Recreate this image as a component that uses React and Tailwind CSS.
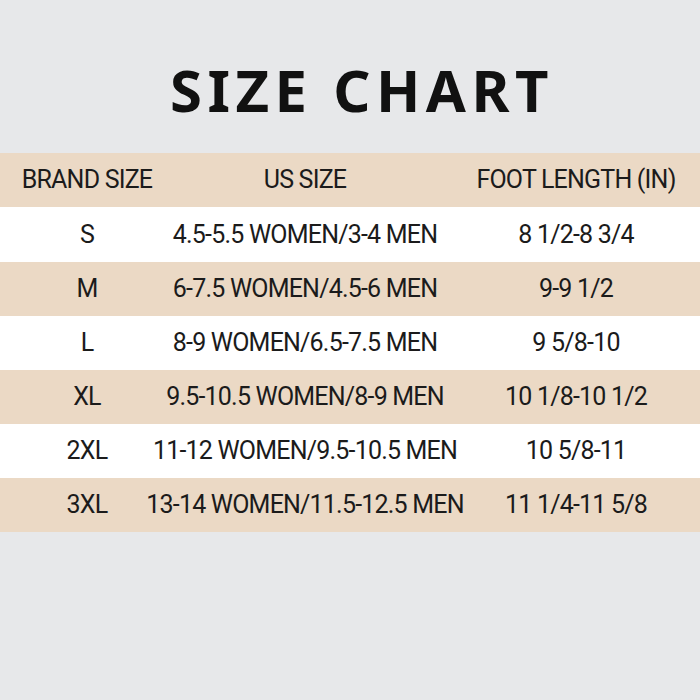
import React from 'react';

const rows = [
  { brand: 'S', us: '4.5-5.5 WOMEN/3-4 MEN', foot: '8 1/2-8 3/4' },
  { brand: 'M', us: '6-7.5 WOMEN/4.5-6 MEN', foot: '9-9 1/2' },
  { brand: 'L', us: '8-9 WOMEN/6.5-7.5 MEN', foot: '9 5/8-10' },
  { brand: 'XL', us: '9.5-10.5 WOMEN/8-9 MEN', foot: '10 1/8-10 1/2' },
  { brand: '2XL', us: '11-12 WOMEN/9.5-10.5 MEN', foot: '10 5/8-11' },
  { brand: '3XL', us: '13-14 WOMEN/11.5-12.5 MEN', foot: '11 1/4-11 5/8' },
];

const Row = ({ cells, beige, height }) => (
  <div className={`flex items-center whitespace-nowrap ${height} ${beige ? 'bg-[#ebd9c5]' : 'bg-white'}`}>
    <div className="w-[174px] flex justify-center">{cells[0]}</div>
    <div className="w-[262px] flex justify-center">{cells[1]}</div>
    <div className="w-[264px] flex justify-center pl-[16px]">{cells[2]}</div>
  </div>
);

export default function App() {
  return (
    <div
      className="w-[700px] h-[700px] bg-[#e7e8ea] text-[#1b1b1b] overflow-hidden"
      style={{ fontFamily: 'Roboto, "Noto Sans", sans-serif' }}
    >
      <div className="h-[153px] flex items-center justify-center pl-[24px] pt-[26px]">
        <h1
          className="text-[58px] font-bold tracking-[0.095em] leading-none text-[#111]"
          style={{ fontFamily: '"Noto Sans", "Open Sans", sans-serif' }}
        >
          SIZE CHART
        </h1>
      </div>
      <div className="text-[25px] tracking-[-0.8px]">
        <Row cells={['BRAND SIZE', 'US SIZE', 'FOOT LENGTH (IN)']} beige height="h-[54px]" />
        {rows.map((r, i) => (
          <Row
            key={r.brand}
            cells={[r.brand, r.us, r.foot]}
            beige={i % 2 === 1}
            height={i === 0 ? 'h-[55px]' : 'h-[54px]'}
          />
        ))}
      </div>
    </div>
  );
}
